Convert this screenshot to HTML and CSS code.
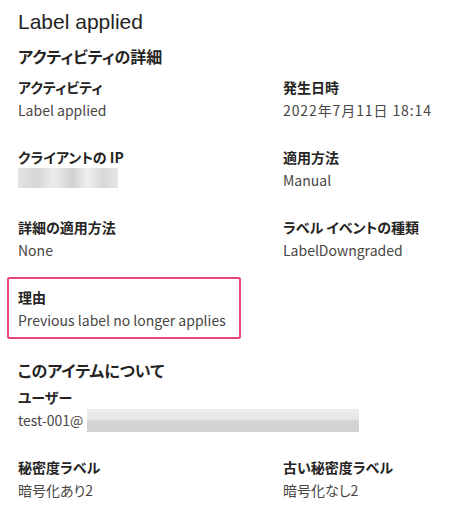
FILE: index.html
```html
<!DOCTYPE html>
<html lang="ja">

<head>
    <meta charset="UTF-8">
    <meta name="viewport" content="width=device-width, initial-scale=1.0">
    <title>Label applied</title>
    <link rel="stylesheet" href="styles.css">
</head>

<body>
    <div class="panel">
        <h1 class="title">Label applied</h1>

        <h2 class="section">アクティビティの詳細</h2>
        <div class="grid">
            <div class="field">
                <div class="label">アクティビティ</div>
                <div class="value">Label applied</div>
            </div>
            <div class="field">
                <div class="label">発生日時</div>
                <div class="value date">2022年7月11日 18:14</div>
            </div>
            <div class="field">
                <div class="label">クライアントの IP</div>
                <div class="value"><span class="blur blur-ip"></span></div>
            </div>
            <div class="field">
                <div class="label">適用方法</div>
                <div class="value">Manual</div>
            </div>
            <div class="field">
                <div class="label">詳細の適用方法</div>
                <div class="value">None</div>
            </div>
            <div class="field">
                <div class="label">ラベル イベントの種類</div>
                <div class="value">LabelDowngraded</div>
            </div>
            <div class="field highlight">
                <div class="label">理由</div>
                <div class="value">Previous label no longer applies</div>
            </div>
        </div>

        <h2 class="section section-item">このアイテムについて</h2>
        <div class="field">
            <div class="label">ユーザー</div>
            <div class="value">test-001@<span class="blur blur-mail"></span></div>
        </div>
        <div class="grid">
            <div class="field">
                <div class="label">秘密度ラベル</div>
                <div class="value">暗号化あり2</div>
            </div>
            <div class="field">
                <div class="label">古い秘密度ラベル</div>
                <div class="value">暗号化なし2</div>
            </div>
        </div>
    </div>
</body>

</html>
```

FILE: styles.css
```css
body {
    margin: 0;
    background-color: #fff;
    font-family: "Noto Sans CJK JP", "Noto Sans", sans-serif;
    font-feature-settings: "palt";
    color: #252423;
}

.panel {
    padding: 6px 18px 0 18px;
}

.title {
    margin: 0;
    font-family: "Liberation Sans", "Noto Sans CJK JP", sans-serif;
    font-size: 21px;
    font-weight: 400;
    line-height: 32px;
}

.section {
    margin: 4px 0 5px 0;
    font-size: 16px;
    font-weight: 700;
    line-height: 28px;
}

.section-item {
    margin-bottom: 1px;
}

.grid {
    display: grid;
    grid-template-columns: 265px 1fr;
}

.field {
    height: 70px;
    padding-top: 1px;
    box-sizing: border-box;
}

.label {
    font-size: 14px;
    font-weight: 700;
    line-height: 22px;
}

.value {
    font-size: 14px;
    line-height: 24px;
    color: #484644;
    display: flex;
    align-items: center;
}

.date {
    letter-spacing: 0.9px;
}

.highlight {
    margin: -8px 0 13px -11px;
    height: 62px;
    width: 234px;
    padding: 7px 0 0 9px;
    border: 2px solid #e8457c;
    border-radius: 2px;
}

.blur {
    display: inline-block;
    height: 20px;
    background: linear-gradient(90deg, #e2e2e2 0%, #d6d6d6 20%, #ececec 35%, #d2d2d2 55%, #efefef 70%, #d8d8d8 85%, #e6e6e6 100%);
}

.blur-ip {
    width: 100px;
}

.blur-mail {
    margin-left: 4px;
    width: 272px;
    height: 23px;
    background: linear-gradient(180deg, #ececec 0%, #e6e6e6 45%, #d6d6d6 50%, #d2d2d2 100%);
}
```
